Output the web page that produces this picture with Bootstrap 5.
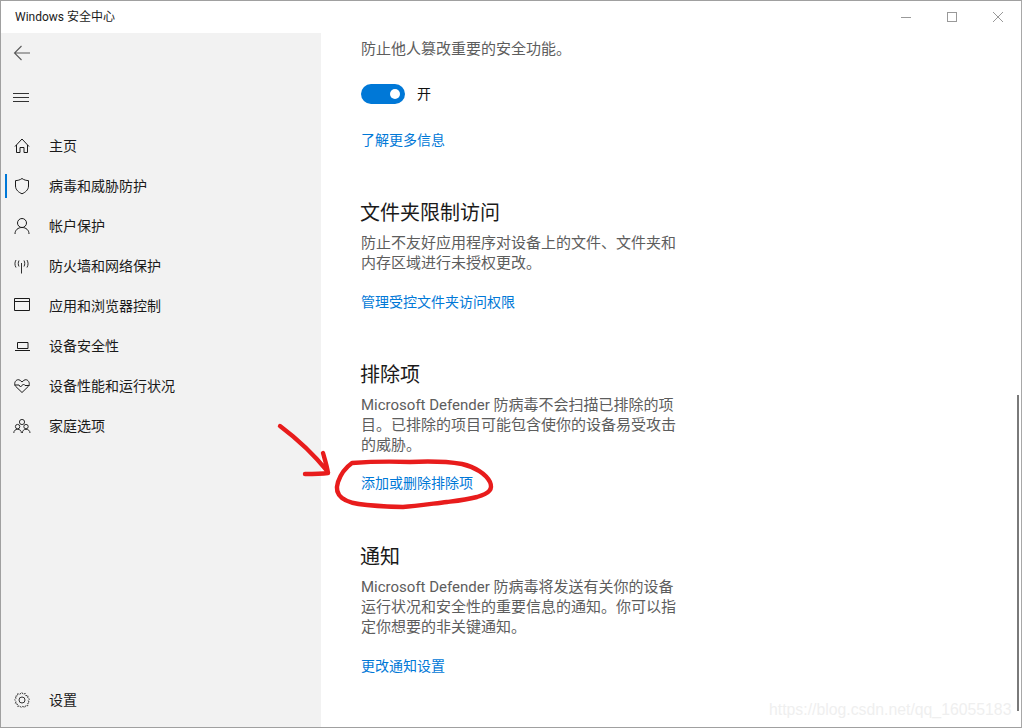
<!DOCTYPE html>
<html lang="zh">
<head>
<meta charset="utf-8">
<title>Windows 安全中心</title>
<link href="https://cdn.jsdelivr.net/npm/bootstrap@5.3.0/dist/css/bootstrap.min.css" rel="stylesheet">
<style>
html,body{margin:0;height:100%;overflow:hidden;background:#fff}
body{font-family:Roboto,"Noto Sans CJK SC",sans-serif;font-size:15px;line-height:20px}
.win-frame{width:1022px;height:728px;border:1px solid #a0a0a0;border-right-color:#a8a8a8;position:relative;overflow:hidden}
.win-title{height:32px;padding-left:14px;font-size:12px;color:#1a1a1a;line-height:32px}
.win-ctrl{width:46px;height:32px}
.win-ctrl svg{display:block}
.win-body{height:694px}
.side-pane{width:320px;background:#f2f2f2;position:relative}
.side-tool{height:40px;padding-left:12px;color:#555}
.side-tool-menu{margin-top:5px;margin-bottom:8px}
.side-item{height:40px;font-size:14px;color:#1a1a1a;position:relative}
.side-glyph{width:48px;padding-left:12px;flex:none}
.side-glyph svg{display:block}
.side-item.is-active::before{content:"";position:absolute;left:4px;top:8px;width:2px;height:24px;background:#0078d7}
.side-foot{height:40px;font-size:14px;color:#1a1a1a;margin-top:auto;margin-bottom:7px}
.main-pane{padding:6px 0 0 40px;position:relative}
.main-col{width:320px}
.sec-title{font-size:20px;line-height:28px;color:#1a1a1a;font-weight:400;margin:0 0 0 -1px}
.sec-text{color:#5d5d5d;margin:0;font-size:15px;line-height:20px}
.sec-link{display:block;font-size:14px;line-height:20px;color:#0078d7;text-decoration:none}
.toggle-row{margin-top:25px;height:20px;color:#111;font-size:14px}
.toggle-track{width:44px;height:20px;border-radius:10px;background:#0078d7;position:relative;margin-right:12px;display:block}
.toggle-track::after{content:"";position:absolute;right:5px;top:5px;width:10px;height:10px;border-radius:50%;background:#fff}
.gap-a{margin-top:26px}.gap-b{margin-top:49px}.gap-c{margin-top:6px}.gap-d{margin-top:19px}.gap-e{margin-top:49px}.gap-f{margin-top:6px}.gap-g{margin-top:18px}.gap-h{margin-top:50px}
.scroll-thumb{position:absolute;right:2px;top:394px;width:2px;height:316px;background:#7a7a7a}
.mark-up{position:absolute;left:-1px;top:-1px;pointer-events:none}
.water-mark{position:absolute;left:768px;top:699px;font-family:"Liberation Sans",sans-serif;font-size:15.8px;line-height:20px;color:#efefef;white-space:nowrap}
</style>
</head>
<body>
<div class="win-frame d-flex flex-column">
  <div class="d-flex align-items-start flex-shrink-0">
    <div class="win-title flex-grow-1">Windows 安全中心</div>
    <div class="win-ctrl"><svg width="46" height="32" viewBox="0 0 46 32"><path d="M18 16.5H28" stroke="#999" fill="none"/></svg></div>
    <div class="win-ctrl"><svg width="46" height="32" viewBox="0 0 46 32"><rect x="18.5" y="11.5" width="9" height="9" stroke="#999" fill="none"/></svg></div>
    <div class="win-ctrl"><svg width="46" height="32" viewBox="0 0 46 32"><path d="M18 11L28 21M28 11L18 21" stroke="#999" fill="none"/></svg></div>
  </div>
  <div class="win-body d-flex flex-grow-1">
    <nav class="side-pane d-flex flex-column flex-shrink-0">
      <div class="side-tool d-flex align-items-center">
        <svg width="18" height="18" viewBox="0 0 18 18" fill="none" stroke="#5a5a5a" stroke-width="1.1"><path d="M1.5 9H17M8.5 2L1.5 9L8.5 16"/></svg>
      </div>
      <div class="side-tool side-tool-menu d-flex align-items-center">
        <svg width="16" height="12" viewBox="0 0 16 12" fill="none" stroke="#333"><path d="M0 1.5H16M0 5.5H16M0 9.5H16"/></svg>
      </div>
      <div class="side-item d-flex align-items-center">
        <span class="side-glyph"><svg width="18" height="18" viewBox="0 0 18 18" fill="none" stroke="#1a1a1a"><path d="M2 9.5L9 2L16 9.5M3.5 8V15.5H7V10.5H11V15.5H14.5V8"/></svg></span>主页
      </div>
      <div class="side-item is-active d-flex align-items-center">
        <span class="side-glyph"><svg width="18" height="18" viewBox="0 0 18 18" fill="none" stroke="#1a1a1a"><path d="M9 1.5C7 3 4.5 3.6 2.5 3.6V9C2.5 13 6 15.5 9 16.8C12 15.5 15.5 13 15.5 9V3.6C13.5 3.6 11 3 9 1.5Z"/></svg></span>病毒和威胁防护
      </div>
      <div class="side-item d-flex align-items-center">
        <span class="side-glyph"><svg width="18" height="18" viewBox="0 0 18 18" fill="none" stroke="#1a1a1a"><circle cx="9" cy="6" r="4.5"/><path d="M2 17C2 13 5 10.5 9 10.5S16 13 16 17"/></svg></span>帐户保护
      </div>
      <div class="side-item d-flex align-items-center">
        <span class="side-glyph"><svg width="18" height="18" viewBox="0 0 18 18" fill="none" stroke="#1a1a1a" stroke-width=".9"><path d="M8.5 6V16.5M6 3.5C5 5.5 5 7.5 6 9.5M11 3.5C12 5.5 12 7.5 11 9.5M3 3C1.6 5.5 1.6 8 3 10.5M14 3C15.4 5.5 15.4 8 14 10.5"/></svg></span>防火墙和网络保护
      </div>
      <div class="side-item d-flex align-items-center">
        <span class="side-glyph"><svg width="18" height="18" viewBox="0 0 18 18" fill="none" stroke="#1a1a1a"><path d="M1.5 1.5H16.5V13.5H1.5ZM1.5 4.5H16.5"/></svg></span>应用和浏览器控制
      </div>
      <div class="side-item d-flex align-items-center">
        <span class="side-glyph"><svg width="18" height="18" viewBox="0 0 18 18" fill="none" stroke="#1a1a1a"><path d="M4.5 5.5H15V11.5H4.5ZM2 13.5H17"/></svg></span>设备安全性
      </div>
      <div class="side-item d-flex align-items-center">
        <span class="side-glyph"><svg width="18" height="18" viewBox="0 0 18 18" fill="none" stroke="#1a1a1a"><path d="M9 15.5L2.7 9.4C-.2 6 3.8 .8 7.2 3.4L9 5L10.8 3.4C14.2 .8 18.2 6 15.3 9.4ZM1.5 8H6L7.5 10L10.5 7L12 8.5H16.5"/></svg></span>设备性能和运行状况
      </div>
      <div class="side-item d-flex align-items-center">
        <span class="side-glyph"><svg width="18" height="18" viewBox="0 0 18 18" fill="none" stroke="#1a1a1a" stroke-width=".9"><circle cx="9" cy="5" r="2.6"/><circle cx="4.6" cy="9.6" r="2.2"/><circle cx="13" cy="9.6" r="2.2"/><path d="M.8 16C.8 13.6 2.4 12.3 4.6 12.3S8.4 13.6 8.4 16M9.4 16C9.4 13.6 10.8 12.3 13 12.3S17 13.6 17 16"/></svg></span>家庭选项
      </div>
      <div class="side-foot d-flex align-items-center">
        <span class="side-glyph"><svg width="18" height="18" viewBox="0 0 18 18" fill="none" stroke="#333" stroke-width="1"><circle cx="9" cy="9" r="3"/><path stroke-dasharray="2 1" d="M9 1.5L10.2 3.3L12.3 2.5L12.8 4.6L15 4.6L14.7 6.8L16.5 8L15.2 9.8L16.5 11.4L14.6 12.5L14.8 14.7L12.6 14.6L11.7 16.4L9.8 15.4L8 16.5L6.8 14.8L4.6 15.3L4.4 13.2L2.3 12.5L3.2 10.5L1.5 9L3 7.3L2.3 5.3L4.4 4.8L4.7 2.7L6.8 3.2Z"/></svg></span>设置
      </div>
    </nav>
    <main class="main-pane flex-grow-1">
      <div class="main-col">
        <p class="sec-text">防止他人篡改重要的安全功能。</p>
        <div class="toggle-row d-flex align-items-center"><span class="toggle-track"></span>开</div>
        <a class="sec-link gap-a" href="#">了解更多信息</a>

        <h2 class="sec-title gap-b">文件夹限制访问</h2>
        <p class="sec-text gap-c">防止不友好应用程序对设备上的文件、文件夹和内存区域进行未授权更改。</p>
        <a class="sec-link gap-d" href="#">管理受控文件夹访问权限</a>

        <h2 class="sec-title gap-e">排除项</h2>
        <p class="sec-text gap-f">Microsoft Defender 防病毒不会扫描已排除的项目。已排除的项目可能包含使你的设备易受攻击的威胁。</p>
        <a class="sec-link gap-g" href="#">添加或删除排除项</a>

        <h2 class="sec-title gap-h">通知</h2>
        <p class="sec-text gap-c">Microsoft Defender 防病毒将发送有关你的设备运行状况和安全性的重要信息的通知。你可以指定你想要的非关键通知。</p>
        <a class="sec-link gap-d" href="#">更改通知设置</a>
      </div>
    </main>
  </div>
  <div class="scroll-thumb"></div>
  <svg class="mark-up" width="1022" height="728" viewBox="0 0 1022 728" fill="none" stroke="#e81c1c" stroke-width="4.4" stroke-linecap="round" stroke-linejoin="round">
    <path d="M280 426C292 435 312 452 328 472M323 453C325 460 327 466 328 473C320 474 312 474 305 474"/>
    <path d="M352 463C365 462 385 461 410 462C430 461 450 462 462 464C475 467 486 474 490 482C493 489 490 493 477 497C465 500 455 501 447 502C430 504 415 506 403 507C390 507 378 506 367 505C355 504 347 502 342 498C337 494 336 488 338 482C340 476 345 468 352 463"/>
  </svg>
  <div class="water-mark">https://blog.csdn.net/qq_16055183</div>
</div>
</body>
</html>
